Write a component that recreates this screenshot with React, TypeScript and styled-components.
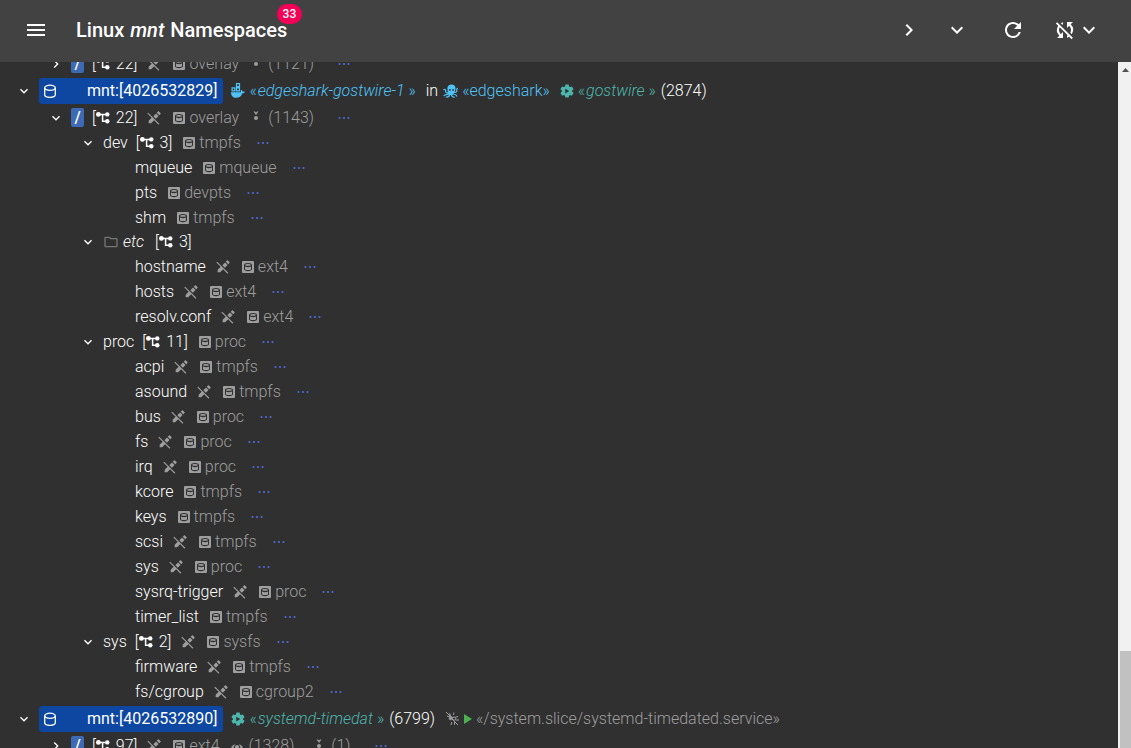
import React, { useState } from "react";
import styled, { createGlobalStyle } from "styled-components";
import { MdChevronRight, MdExpandMore, MdMenu, MdOutlineFolder, MdRefresh, MdSyncDisabled } from "react-icons/md";

const palette = {
  bar: "#424242",
  page: "#303030",
  text: "#ffffff",
  muted: "#9e9e9e",
  faint: "#757575",
  namespace: "#0d47a1",
  root: "#3d6ab5",
  docker: "#4fc3f7",
  process: "#4db6ac",
  more: "#5468d4",
  run: "#4caf50",
  badge: "#f50057",
};

const GlobalStyle = createGlobalStyle`
  *, *::before, *::after { box-sizing: border-box; }
  body {
    margin: 0;
    background: ${palette.page};
    color: ${palette.text};
    font-family: Roboto, "Liberation Sans", sans-serif;
    font-size: 16px;
    font-weight: 300;
  }
`;

const Shell = styled.div`
  display: flex;
  flex-direction: column;
  height: 100vh;
  overflow: hidden;
`;

const AppBar = styled.header`
  display: flex;
  flex: none;
  align-items: center;
  height: 62px;
  padding: 0 30px 2px 24px;
  background: ${palette.bar};
`;

const IconButton = styled.button<{ $width?: number }>`
  display: inline-flex;
  align-items: center;
  justify-content: center;
  width: ${(p) => p.$width ?? 24}px;
  height: 24px;
  padding: 0;
  border: 0;
  background: none;
  color: inherit;
  cursor: pointer;
`;

const Title = styled.h1`
  position: relative;
  margin: 0 auto 0 28px;
  font-size: 20px;
  font-weight: 500;
  line-height: 32px;
  white-space: nowrap;

  em { margin: 0 1px; }
`;

const Badge = styled.span`
  position: absolute;
  top: -10px;
  right: -15px;
  min-width: 25px;
  height: 20px;
  padding: 0 6px;
  border-radius: 10px;
  background: ${palette.badge};
  font-size: 12px;
  line-height: 20px;
  text-align: center;
`;

const Actions = styled.div`
  display: flex;
  align-items: center;
`;

const ActionGroup = styled.div<{ $gap: number }>`
  display: flex;
  margin-left: ${(p) => p.$gap}px;
`;

const Content = styled.div`
  display: flex;
  flex: 1;
  min-height: 0;
`;

const Viewport = styled.main`
  flex: 1;
  min-width: 0;
  overflow: hidden;
`;

const Tree = styled.div`
  margin-top: -11px;
  padding-left: 16px;
`;

const Row = styled.div<{ $depth: number; $height: number }>`
  display: flex;
  align-items: center;
  height: ${(p) => p.$height}px;
  padding-left: ${(p) => p.$depth * 32}px;
  line-height: 24px;
  white-space: nowrap;
`;

const Toggle = styled.button`
  display: inline-flex;
  flex: none;
  align-items: center;
  justify-content: center;
  width: 16px;
  height: 16px;
  margin-right: 7px;
  padding: 0;
  border: 0;
  background: none;
  color: inherit;
  cursor: pointer;
`;

const ToggleSpace = styled.span`
  flex: none;
  width: 23px;
`;

const NamespaceLabel = styled.span`
  display: inline-flex;
  align-items: center;
  height: 26px;
  padding: 0 6px 0 4px;
  border-radius: 3px;
  background: ${palette.namespace};
  font-weight: 400;

  svg { margin-right: 30px; }
`;

const RootLabel = styled.span`
  width: 13px;
  height: 19px;
  border-radius: 2px;
  background: ${palette.root};
  font-weight: 500;
  line-height: 19px;
  text-align: center;
`;

const Count = styled.span`
  display: inline-flex;
  align-items: center;
  gap: 6px;
  margin-left: 8px;
`;

const CountIcon = styled.span`
  display: inline-flex;
  align-items: center;
`;

const ReadOnly = styled.span`
  display: inline-flex;
  margin-left: 9px;
  color: ${palette.muted};
`;

const Detail = styled.span`
  display: inline-flex;
  align-items: center;
  gap: 4px;
  margin-left: 11px;
  color: ${palette.muted};
`;

const Propagation = styled(Detail)`
  gap: 6px;
  margin-right: 8px;
`;

const More = styled(IconButton)`
  margin-left: 10px;
  color: ${palette.more};
`;

const Owner = styled.span<{ $color: string; $gap: number }>`
  display: inline-flex;
  align-items: center;
  gap: 4px;
  margin-left: ${(p) => p.$gap}px;
  color: ${(p) => p.$color};

  em { margin: 0 4px 0 1px; }
`;

const Plain = styled.span<{ $gap: number }>`
  margin-left: ${(p) => p.$gap}px;
`;

const FolderName = styled.em`
  margin: 0 3px 0 4px;
`;

const FolderIcon = styled.span`
  display: inline-flex;
  color: ${palette.faint};
`;

const Track = styled.div`
  display: grid;
  grid-template-rows: 16px 573fr 97fr;
  flex: none;
  width: 13px;
  padding-left: 2px;
  background: #f1f1f1;
`;

const Thumb = styled.div`
  grid-row: 3;
  background: #c1c1c1;
`;

const ScrollUp = styled.div`
  display: flex;
  align-items: center;
  justify-content: center;
`;

const TreeIcon = () => (
  <svg width="14" height="12" viewBox="0 0 14 12" fill="currentColor">
    <circle cx="2.4" cy="2.4" r="2.4" />
    <circle cx="11.3" cy="2.4" r="2.2" />
    <circle cx="11.3" cy="9.2" r="2.2" />
    <path d="M3 2.4h8M6.6 2.4v6.8h4.6" fill="none" stroke="currentColor" strokeWidth="1.5" />
  </svg>
);

const DatabaseIcon = () => (
  <svg width="14" height="14" viewBox="0 0 14 14" fill="none" stroke="currentColor" strokeWidth="1.3">
    <ellipse cx="7" cy="3.8" rx="5.3" ry="2.6" />
    <path d="M1.7 3.8v7c0 1.500 2.300 2.600 5.300 2.600s5.300-1.100 5.300-2.600v-7" />
  </svg>
);

const FilesystemIcon = () => (
  <svg width="12" height="12" viewBox="0 0 12 12">
    <rect width="12" height="12" rx="1" fill="currentColor" />
    <path d="M2 3.900C2 2.700 3.700 2 6 2s4 .7 4 1.900v4.400C10 9.400 8.300 10.200 6 10.200S2 9.400 2 8.300Z" fill={palette.page} />
    <ellipse cx="6" cy="3.900" rx="2.900" ry="0.900" fill="currentColor" />
    <path d="M3 5.500c.8.500 1.800.7 3 .7s2.200-.2 3-.7v2.700c-.6.600-1.700.9-3 .9s-2.400-.3-3-.9Z" fill="currentColor" />
  </svg>
);

const PencilOffIcon = () => (
  <svg width="16" height="16" viewBox="0 0 24 24" fill="currentColor">
    <path d="M18.66 2c-.26 0-.5.09-.69.28l-1.840 1.850 3.750 3.750 1.840-1.850c.39-.39.39-1.030 0-1.400l-2.340-2.350C19.180 2.090 18.910 2 18.660 2M3.280 4 2 5.280l6.500 6.470-4.500 4.500V20h3.750l4.500-4.500 6.470 6.500L20 20.720l-6.500-6.470-3.750-3.750L3.280 4m11.780 1.190-4.030 4.030 3.750 3.750 4.030-4.030-3.750-3.750Z" />
  </svg>
);

const MoreIcon = () => (
  <svg width="14" height="4" viewBox="0 0 14 4" fill="currentColor">
    <circle cx="2.500" cy="2" r="1.100" />
    <circle cx="7" cy="2" r="1.100" />
    <circle cx="11.500" cy="2" r="1.100" />
  </svg>
);

const SlaveIcon = () => (
  <svg width="12" height="14" viewBox="0 0 12 14" fill="currentColor">
    <path d="M3.500 0.500h1.500l1 1 1-1h1.500L6 4Z" />
    <circle cx="6" cy="7" r="2" />
  </svg>
);

const SharedIcon = () => (
  <svg width="12" height="14" viewBox="0 0 12 14" fill="currentColor">
    <circle cx="6" cy="8" r="2" />
    <path d="M3.500 5v2L2.200 8l1.300 1v2L0 8ZM8.500 5v2l1.300 1-1.300 1v2L12 8Z" />
  </svg>
);

const DockerIcon = () => (
  <svg width="14" height="15" viewBox="0 0 14 15" fill="none" stroke="currentColor">
    <path d="M5.500.6h3v3h-3zM1.100 4.900h2.800v3H1.100zM5.500 4.900h3v3h-3z" strokeWidth="1.200" />
    <path d="M0 9.300h10c-.4-1-.3-1.900.3-2.600.8.500 1.100 1 1.200 1.700.9 0 1.800 0 2.500.4-.5 1.300-1.600 1.600-2.800 1.600-1 2.900-3 4.400-6 4.400C1.800 14.800 0 12.800 0 9.300Z" fill="currentColor" stroke="none" />
  </svg>
);

const OctopusIcon = () => (
  <svg width="15" height="14" viewBox="0 0 15 14" fill="none" stroke="currentColor" strokeWidth="1.200" strokeLinecap="round">
    <path d="M8.500.5c2.500 0 4 1.700 4 3.900 0 1.600-.8 2.400-.8 3.800L9.500 11H6L4.800 8.600C4.800 6.800 4.400 6 4.400 4.400 4.400 2.200 6 .5 8.500.5ZM6.900 5a.9.9 0 1 0 0 1.800.9.900 0 0 0 0-1.800Zm3.200 0a.9.9 0 1 0 0 1.800.9.900 0 0 0 0-1.800Z" fill="currentColor" fillRule="evenodd" stroke="none" />
    <path d="M5.500 8.500C4 9.500 2.200 8.500 2.600 6.800 2.800 5.600 1.700 5 .8 5.700M6 9.800c-1.700 1.500-4 .2-5 1.800M7 10.500c-.5 1.500-1.800 2.700-3.800 2.500M8.500 10.500c0 1.600 1 2.700 2.700 2.600M10 9.500c1 1.700 3.200.2 3.800 2.600M11 8c1.500.8 3.200 0 2.700-1.700-.2-1 .1-1.500.7-1.900" />
  </svg>
);

const ProcessIcon = () => (
  <svg width="14" height="14" viewBox="0 0 24 24" fill="currentColor" fillRule="evenodd">
    <path d="m9.200 1-.6 3.100-2 1.200L3.500 4.200.7 9l2.500 2.100v2L.7 15.200 3.500 20l3.100-1.100 2 1.200.6 3h5.600l.6-3 2-1.200 3.100 1.100 2.800-4.800-2.500-2.100v-2L23.300 9l-2.800-4.800-3.100 1.100-2-1.200-.6-3.100ZM9 8v8.200l6.800-4.100Z" />
  </svg>
);

const SliceIcon = () => (
  <svg width="15" height="15" viewBox="0 0 15 15" fill="none" stroke="currentColor" strokeWidth="1">
    <path d="m1 1 5 5M2 5l4 1M4.500 2l1.300 4M6 7l7 7M9 1.500 8.500 4M13 5.500 10 6.500M6 14l.8-3M10.500 9H14M9.500 10.500v3.300" />
    <path d="m5 4.500 3.200 1.700L6 9.500 3.500 8Z" fill="currentColor" stroke="none" />
    <circle cx="9.200" cy="7.600" r="1.600" />
  </svg>
);

const RunIcon = () => (
  <svg width="8" height="10" viewBox="0 0 8 10" fill={palette.run}>
    <path d="M0 0v10l8-5Z" />
  </svg>
);

interface Mount {
  name: string;
  depth: number;
  kind?: "root" | "folder";
  open?: boolean;
  count?: number;
  readOnly?: boolean;
  fs?: string;
  shared?: string;
  slave?: string;
}

const leaf = (name: string, fs: string, readOnly = false): Mount => ({ name, depth: 3, fs, readOnly });

const mounts: Mount[] = [
  { name: "/", depth: 1, kind: "root", open: true, count: 22, readOnly: true, fs: "overlay", slave: "(1143)" },
  { name: "dev", depth: 2, open: true, count: 3, fs: "tmpfs" },
  leaf("mqueue", "mqueue"),
  leaf("pts", "devpts"),
  leaf("shm", "tmpfs"),
  { name: "etc", depth: 2, kind: "folder", open: true, count: 3 },
  leaf("hostname", "ext4", true),
  leaf("hosts", "ext4", true),
  leaf("resolv.conf", "ext4", true),
  { name: "proc", depth: 2, open: true, count: 11, fs: "proc" },
  leaf("acpi", "tmpfs", true),
  leaf("asound", "tmpfs", true),
  leaf("bus", "proc", true),
  leaf("fs", "proc", true),
  leaf("irq", "proc", true),
  leaf("kcore", "tmpfs"),
  leaf("keys", "tmpfs"),
  leaf("scsi", "tmpfs", true),
  leaf("sys", "proc", true),
  leaf("sysrq-trigger", "proc", true),
  leaf("timer_list", "tmpfs"),
  { name: "sys", depth: 2, open: true, count: 2, readOnly: true, fs: "sysfs" },
  leaf("firmware", "tmpfs", true),
  leaf("fs/cgroup", "cgroup2", true),
];

const Chevron = ({ open, onClick }: { open: boolean; onClick?: () => void }) => (
  <Toggle aria-label={open ? "Collapse" : "Expand"} onClick={onClick}>
    {open ? <MdExpandMore size={16} /> : <MdChevronRight size={16} />}
  </Toggle>
);

const MountName = ({ name, kind }: Mount) => {
  if (kind === "root") return <RootLabel>{name}</RootLabel>;
  if (kind === "folder")
    return (
      <>
        <FolderIcon><MdOutlineFolder size={16} /></FolderIcon>
        <FolderName>{name}</FolderName>
      </>
    );
  return <span>{name}</span>;
};

const MountRow = (mount: Mount) => (
  <Row role="treeitem" $depth={mount.depth} $height={mount.kind === "folder" ? 24 : 25}>
    {mount.count ? <Chevron open={!!mount.open} /> : <ToggleSpace />}
    <MountName {...mount} />
    {mount.count && (
      <Count>
        <CountIcon>[<TreeIcon /></CountIcon>
        {mount.count}]
      </Count>
    )}
    {mount.readOnly && <ReadOnly><PencilOffIcon /></ReadOnly>}
    {mount.fs && <Detail><FilesystemIcon />{mount.fs}</Detail>}
    {mount.shared && <Propagation><SharedIcon />{mount.shared}</Propagation>}
    {mount.slave && <Propagation><SlaveIcon />{mount.slave}</Propagation>}
    {mount.fs && <More aria-label="Mount point details"><MoreIcon /></More>}
  </Row>
);

interface NamespaceProps {
  id: string;
  open: boolean;
  onToggle: () => void;
  children: React.ReactNode;
}

const NamespaceRow = ({ id, open, onToggle, children }: NamespaceProps) => (
  <Row role="treeitem" $depth={0} $height={29}>
    <Chevron open={open} onClick={onToggle} />
    <NamespaceLabel><DatabaseIcon />mnt:[{id}]</NamespaceLabel>
    {children}
  </Row>
);

export default function App() {
  const [open, setOpen] = useState(true);
  const [lastOpen, setLastOpen] = useState(true);

  return (
    <Shell>
      <GlobalStyle />
      <AppBar>
        <IconButton aria-label="Menu"><MdMenu size={24} /></IconButton>
        <Title>
          Linux <em>mnt</em> Namespaces
          <Badge>33</Badge>
        </Title>
        <Actions>
          <IconButton $width={48} aria-label="Collapse all"><MdChevronRight size={24} /></IconButton>
          <IconButton $width={48} aria-label="Expand all"><MdExpandMore size={24} /></IconButton>
          <ActionGroup $gap={16}>
            <IconButton $width={32} aria-label="Refresh"><MdRefresh size={24} /></IconButton>
          </ActionGroup>
          <ActionGroup $gap={24}>
            <IconButton aria-label="Automatic refresh"><MdSyncDisabled size={24} /></IconButton>
            <IconButton aria-label="Refresh interval"><MdExpandMore size={24} /></IconButton>
          </ActionGroup>
        </Actions>
      </AppBar>
      <Content>
        <Viewport>
          <Tree role="tree">
            <MountRow name="/" depth={1} kind="root" count={22} readOnly fs="overlay" slave="(1121)" />
            <NamespaceRow id="4026532829" open={open} onToggle={() => setOpen(!open)}>
              <Owner $color={palette.docker} $gap={8}><DockerIcon /><span>«<em>edgeshark-gostwire-1</em>»</span></Owner>
              <Plain $gap={10}>in</Plain>
              <Owner $color={palette.docker} $gap={5}><OctopusIcon />«edgeshark»</Owner>
              <Owner $color={palette.process} $gap={10}><ProcessIcon /><span>«<em>gostwire</em>»</span></Owner>
              <Plain $gap={5}>(2874)</Plain>
            </NamespaceRow>
            {open && mounts.map((mount, i) => <MountRow key={i} {...mount} />)}
            <NamespaceRow id="4026532890" open={lastOpen} onToggle={() => setLastOpen(!lastOpen)}>
              <Owner $color={palette.process} $gap={8}><ProcessIcon /><span>«<em>systemd-timedat</em>»</span></Owner>
              <Plain $gap={5}>(6799)</Plain>
              <Owner $color={palette.muted} $gap={10}><SliceIcon /><RunIcon />«/system.slice/systemd-timedated.service»</Owner>
            </NamespaceRow>
            {lastOpen && <MountRow name="/" depth={1} kind="root" count={97} readOnly fs="ext4" shared="(1328)" slave="(1)" />}
          </Tree>
        </Viewport>
        <Track aria-hidden="true">
          <ScrollUp>
            <svg width="7" height="4" viewBox="0 0 7 4" fill="#505050"><path d="M0 4h7L3.500 0Z" /></svg>
          </ScrollUp>
          <Thumb />
        </Track>
      </Content>
    </Shell>
  );
}
